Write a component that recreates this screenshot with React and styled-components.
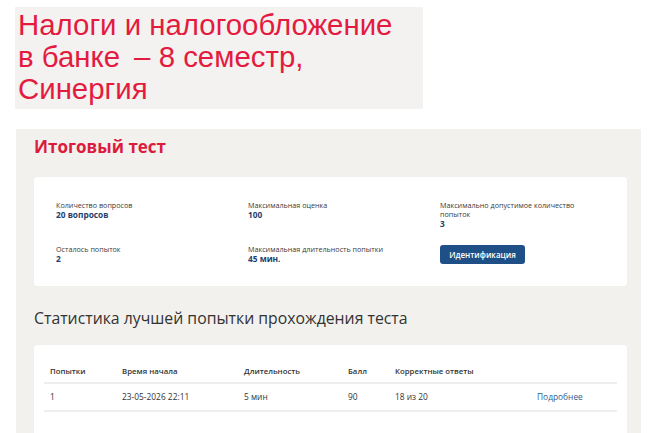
import React from "react";
import styled, { createGlobalStyle } from "styled-components";

const Global = createGlobalStyle`
  html, body { margin: 0; padding: 0; background: #ffffff; }
  body { font-family: "Open Sans", "Noto Sans", sans-serif; overflow: hidden; }
`;

const Page = styled.div`
  width: 647px;
  height: 433px;
  overflow: hidden;
  padding-top: 7px;
  box-sizing: border-box;
`;

const Banner = styled.div`
  margin-left: 15px;
  width: 408px;
  height: 102px;
  background: #f3f2f0;
  box-sizing: border-box;
  padding: 2px 0 0 3px;
  font-family: "Liberation Sans", Arial, sans-serif;
  font-size: 29.4px;
  line-height: 32px;
  color: #e31b3f;
`;

const Panel = styled.div`
  margin: 20px 0 0 16px;
  width: 625px;
  height: 320px;
  background: #f2f1ee;
  box-sizing: border-box;
  padding: 6px 14px 0 18px;
`;

const Title = styled.h1`
  margin: 0;
  font-size: 17px;
  line-height: 24px;
  font-weight: 700;
  color: #dc1c3e;
`;

const Card = styled.div`
  background: #ffffff;
  border-radius: 3px;
  box-shadow: 0 0 1px rgba(0, 0, 0, 0.06);
`;

const InfoCard = styled(Card)`
  margin-top: 18px;
  height: 109px;
  box-sizing: border-box;
  padding: 24px 0 0 22px;
  display: grid;
  grid-template-columns: 192px 192px 170px;
  grid-template-rows: 44px auto;
`;

const Field = styled.div`
  display: flex;
  flex-direction: column;
`;

const Label = styled.div`
  font-size: 7.2px;
  line-height: 9px;
  color: #3a3a3a;
  max-width: ${(p) => p.$max || "none"};
`;

const Value = styled.div`
  font-size: 8.3px;
  line-height: 10px;
  font-weight: 700;
  color: #1f3f6d;
`;

const Button = styled.button`
  width: 85px;
  height: 19px;
  padding: 0;
  border: none;
  border-radius: 3px;
  background: #1e4f86;
  color: #ffffff;
  font-family: "Open Sans", sans-serif;
  font-size: 8px;
  font-weight: 600;
  cursor: pointer;
`;

const Subtitle = styled.h2`
  margin: 21px 0 0 0;
  font-size: 15.8px;
  line-height: 22px;
  font-weight: 400;
  color: #333333;
`;

const TableCard = styled(Card)`
  margin-top: 16px;
  height: 100px;
  box-sizing: border-box;
  padding: 12px 10px 0 10px;
`;

const Table = styled.div`
  display: grid;
  grid-template-columns: 72px 122px 104px 47px 142px 80px;
  padding-left: 6px;
`;

const Cell = styled.div`
  font-size: ${(p) => (p.$head ? "7.8px" : "8.4px")};
  line-height: ${(p) => (p.$head ? "22px" : "26px")};
  height: ${(p) => (p.$head ? "22px" : "26px")};
  padding-top: ${(p) => (p.$head ? "3px" : "0")};
  color: ${(p) => (p.$link ? "#2f5d8f" : "#333333")};
  font-weight: ${(p) => (p.$head ? 600 : 400)};
  border-bottom: 2px solid #eeeeec;
  margin-left: ${(p) => (p.$first ? "-6px" : "0")};
  padding-left: ${(p) => (p.$first ? "6px" : "0")};
`;

const info = [
  { label: "Количество вопросов", value: "20 вопросов" },
  { label: "Максимальная оценка", value: "100" },
  { label: "Максимально допустимое количество попыток", value: "3", max: "150px" },
  { label: "Осталось попыток", value: "2" },
  { label: "Максимальная длительность попытки", value: "45 мин." },
];

const head = ["Попытки", "Время начала", "Длительность", "Балл", "Корректные ответы", ""];
const row = ["1", "23-05-2026 22:11", "5 мин", "90", "18 из 20", "Подробнее"];

export default function App() {
  return (
    <Page>
      <Global />
      <Banner>
        Налоги и налогообложение
        <br />в банке{"\u2009"} – 8 семестр,
        <br />Синергия
      </Banner>
      <Panel>
        <Title>Итоговый тест</Title>
        <InfoCard>
          {info.map((f) => (
            <Field key={f.label}>
              <Label $max={f.max}>{f.label}</Label>
              <Value>{f.value}</Value>
            </Field>
          ))}
          <Field>
            <Button>Идентификация</Button>
          </Field>
        </InfoCard>
        <Subtitle>Статистика лучшей попытки прохождения теста</Subtitle>
        <TableCard>
          <Table>
            {head.map((h, i) => (
              <Cell key={"h" + i} $head $first={i === 0}>
                {h}
              </Cell>
            ))}
            {row.map((c, i) => (
              <Cell key={"r" + i} $first={i === 0} $link={i === 5}>
                {c}
              </Cell>
            ))}
          </Table>
        </TableCard>
      </Panel>
    </Page>
  );
}
